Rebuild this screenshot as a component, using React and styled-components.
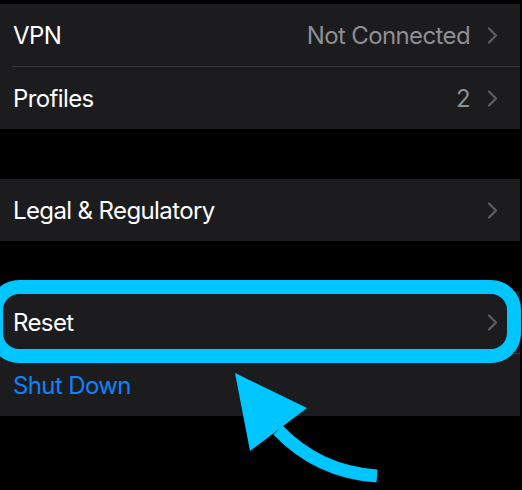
import React from 'react'
import styled, { createGlobalStyle } from 'styled-components'

const GlobalStyle = createGlobalStyle`
  body {
    margin: 0;
    background: #000;
    font-family: Inter, "Noto Sans", "DejaVu Sans", sans-serif;
  }
`

const Page = styled.div`
  position: relative;
  width: 522px;
  height: 490px;
  padding-top: 4px;
  box-sizing: border-box;
  background: #000;
  overflow: hidden;
`

const Group = styled.div`
  width: 520px;
  background: #1c1c1e;
  margin-bottom: 50px;
`

const Row = styled.div`
  height: 62px;
  display: flex;
  align-items: center;
  padding: 0 22px 0 13px;
  border-top: ${p => (p.$divider ? '1px solid #38383a' : 'none')};
  margin-left: ${p => (p.$divider ? '12px' : '0')};
  padding-left: ${p => (p.$divider ? '1px' : '13px')};
`

const Label = styled.span`
  flex: 1;
  font-size: 24px;
  letter-spacing: -0.62px;
  color: ${p => (p.$action ? '#0a84ff' : '#ffffff')};
`

const Value = styled.span`
  font-size: 24px;
  letter-spacing: -0.62px;
  color: #8e8e93;
  margin-right: 17px;
`

const Overlay = styled.svg`
  position: absolute;
  left: 0;
  top: 0;
  pointer-events: none;
`

const Chevron = () => (
  <svg width="11" height="17" viewBox="0 0 11 17">
    <path d="M2 1.5 L9 8.5 L2 15.5" fill="none" stroke="#5b5b5f" strokeWidth="2.4" strokeLinecap="round" strokeLinejoin="round" />
  </svg>
)

const Item = ({ label, value, divider, action, chevron = true }) => (
  <Row $divider={divider}>
    <Label $action={action}>{label}</Label>
    {value && <Value>{value}</Value>}
    {chevron && <Chevron />}
  </Row>
)

export default function App() {
  return (
    <Page>
      <GlobalStyle />
      <Group>
        <Item label="VPN" value="Not Connected" />
        <Item label="Profiles" value="2" divider />
      </Group>
      <Group>
        <Item label="Legal & Regulatory" />
      </Group>
      <Group>
        <Item label="Reset" />
        <Item label="Shut Down" divider action chevron={false} />
      </Group>

      <Overlay width="522" height="490" viewBox="0 0 522 490">
        <rect x="-4" y="287" width="518" height="69" rx="23" fill="none" stroke="#00c6ff" strokeWidth="14" />
        <path d="M278 430 Q318 472 377 476" fill="none" stroke="#00c6ff" strokeWidth="13" />
        <polygon points="235,373 307,408 250,451" fill="#00c6ff" />
      </Overlay>
    </Page>
  )
}
